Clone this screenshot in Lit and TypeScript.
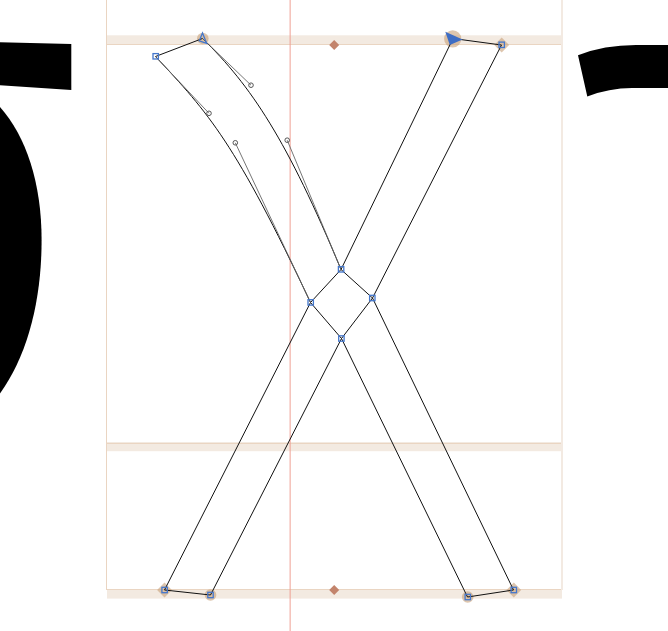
import { LitElement, css, html, svg } from "lit";
import { customElement } from "lit/decorators.js";

type Point = [number, number];

const corners: Point[] = [
  [155.7, 56.3], [501.7, 44.8], [341.1, 269.3], [372.3, 298], [310.7, 302.4],
  [341.4, 338.5], [164.6, 590], [210.5, 595], [467.8, 597], [513.8, 590],
];

const handles: { from: Point; to: Point }[] = [
  { from: [155.5, 56.5], to: [209, 113.3] },
  { from: [310.5, 302.5], to: [235.3, 142.8] },
  { from: [202.5, 38.5], to: [251, 85.2] },
  { from: [341, 269.5], to: [287.2, 140.2] },
];

const zoneDiamonds: Point[] = [[501.7, 45], [164.5, 590], [513.8, 590]];
const zoneDots: [number, number, number][] = [
  [202.8, 38.5, 5.8], [452.7, 38.8, 8.6], [210.5, 595, 5.8], [467.7, 597, 5.8],
];
const anchors: Point[] = [[334.2, 45], [334.2, 590]];

const diamond = ([x, y]: Point, r: number) =>
  `M${x} ${y - r}L${x + r} ${y}L${x} ${y + r}L${x - r} ${y}Z`;

@customElement("app-root")
export class AppRoot extends LitElement {
  static styles = css`
    :host { display: block; background: #fff; overflow: hidden; }
    .canvas { display: block; width: 100%; height: auto; }
    .zone { fill: #f3eae1; }
    .metric { fill: #ead5c2; }
    .edge { fill: #f3eae2; }
    .guide { fill: #ee9d90; fill-opacity: 0.6; }
    .neighbour { fill: #000; }
    .outline { fill: none; stroke: #111; stroke-width: 1; }
    .stem { stroke: #666; stroke-width: 0.9; }
    .handle { fill: none; stroke: #555; stroke-width: 1; }
    .marker { fill: #c8a078; fill-opacity: 0.6; }
    .anchor { fill: #c3846c; }
    .node { fill: none; stroke: #4477cc; stroke-width: 1.3; }
    .start { fill: #3e6dc4; }
  `;

  render() {
    return html`
      <svg class="canvas" viewBox="0 0 668 631" role="img" aria-label="Glyph outline editor">
        <rect class="zone" x="107" y="35.3" width="455" height="9.2" />
        <rect class="zone" x="107" y="442" width="455" height="9.2" />
        <rect class="zone" x="107" y="589" width="455" height="9.6" />
        <rect class="metric" x="106" y="44" width="456" height="1" />
        <rect class="metric" x="106" y="443" width="456" height="1" />
        <rect class="metric" x="106" y="589" width="456" height="1" />
        <rect class="metric" x="106" y="0" width="1" height="590" />
        <rect class="edge" x="561" y="0" width="2" height="590" />
        <rect class="guide" x="289.4" y="0" width="1.6" height="631" />

        <path class="neighbour" d="M0 42.2L71.3 44V90L0 85.2Z" />
        <path class="neighbour" d="M0 107C26 136 41.6 183 41.6 240C41.6 302 27 356 0 393.5Z" />
        <path class="neighbour" d="M578 55.2Q604 45 636 45H668V88H632Q609 88 587.3 96.5Z" />

        ${zoneDots.map(([x, y, r]) => svg`<circle class="marker" cx=${x} cy=${y} r=${r} />`)}
        ${zoneDiamonds.map((p) => svg`<path class="marker" d=${diamond(p, 7.4)} />`)}
        ${anchors.map((p) => svg`<path class="anchor" d=${diamond(p, 5)} />`)}

        <path class="outline" d="M155.5 56.5L202.5 38.5C251 85.5 287.3 140.3 341 269.5L310.5 302.5C235.5 143 209 113.5 155.5 56.5Z" />
        <path class="outline" d="M341 269.5L453 38.5L501.5 45L372.5 298Z" />
        <path class="outline" d="M372.5 298L513.5 590L467.5 597L341.5 338.5Z" />
        <path class="outline" d="M341.5 338.5L210.5 595L164.5 590L310.5 302.5Z" />

        ${handles.map(({ from, to }) => svg`
          <line class="stem" x1=${from[0]} y1=${from[1]} x2=${to[0]} y2=${to[1]} />
          <circle class="handle" cx=${to[0]} cy=${to[1]} r="2.3" />`)}
        ${corners.map(([x, y]) => svg`
          <rect class="node" x=${x - 2.7} y=${y - 2.7} width="5.4" height="5.4" />`)}
        <path class="node" d="M202.5 33L206.7 43.4L199.3 40.8Z" />
        <path class="start" d="M445.3 31.8L462.6 39.6L449.8 45Z" />
      </svg>
    `;
  }
}
